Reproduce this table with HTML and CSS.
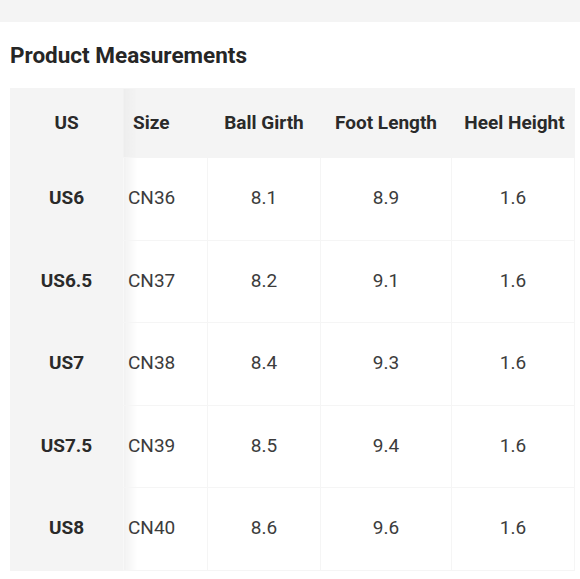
FILE: index.html
```html
<!DOCTYPE html>
<html>
<head>
<meta charset="utf-8">
<link rel="stylesheet" href="styles.css">
</head>
<body>
<div class="topbar"></div>
<section class="panel">
  <h2 class="title">Product Measurements</h2>
  <table class="sizes">
    <colgroup>
      <col class="c1"><col class="c2"><col class="c3"><col class="c4"><col class="c5">
    </colgroup>
    <thead>
      <tr><th class="fixed">US</th><th class="left shade">Size</th><th>Ball Girth</th><th>Foot Length</th><th class="last">Heel Height</th></tr>
    </thead>
    <tbody>
      <tr><th class="fixed">US6</th><td class="left shade">CN36</td><td>8.1</td><td>8.9</td><td>1.6</td></tr>
      <tr><th class="fixed">US6.5</th><td class="left shade">CN37</td><td>8.2</td><td>9.1</td><td>1.6</td></tr>
      <tr><th class="fixed">US7</th><td class="left shade">CN38</td><td>8.4</td><td>9.3</td><td>1.6</td></tr>
      <tr><th class="fixed">US7.5</th><td class="left shade">CN39</td><td>8.5</td><td>9.4</td><td>1.6</td></tr>
      <tr><th class="fixed">US8</th><td class="left shade">CN40</td><td>8.6</td><td>9.6</td><td>1.6</td></tr>
    </tbody>
  </table>
</section>
</body>
</html>
```
FILE: styles.css
```css
html, body { margin: 0; padding: 0; background: #fff; }
body { font-family: Roboto, "Liberation Sans", sans-serif; color: #333; width: 580px; height: 579px; overflow: hidden; }
.topbar { height: 22px; background: #f4f4f4; }
.panel { padding: 0 6px 0 10px; }
.title { margin: 0; padding-top: 19px; height: 47px; box-sizing: border-box; font-size: 22.5px; font-weight: 700; color: #262626; line-height: 28px; }
.sizes { border-collapse: collapse; width: 564px; table-layout: fixed; margin-top: 19px; }
.c1 { width: 112px; } .c2 { width: 85px; } .c3 { width: 113px; } .c4 { width: 131px; } .c5 { width: 123px; }
.sizes th, .sizes td { text-align: center; font-size: 19px; padding: 0 0 2px; border: 1px solid #f5f5f5; }
.sizes thead th { height: 66px; background: #f4f4f4; font-weight: 700; color: #2a2a2a; border-color: #f4f4f4; }
.sizes tbody td, .sizes tbody th { height: 79.5px; }
.sizes tbody td { color: #3c3c3c; font-weight: 400; }
.sizes th.fixed { background: #f4f4f4; font-weight: 700; color: #2a2a2a; border-color: #f4f4f4; }
.sizes .left { text-align: left; padding-left: 5px; }
.sizes thead .left { padding-left: 10px; }
.sizes thead .last { padding-left: 3px; }
.sizes .shade { background-image: linear-gradient(to right, #f1f1f1, rgba(255,255,255,0) 14px); }
.sizes thead .shade { background-image: linear-gradient(to right, #ededed, rgba(244,244,244,0) 14px); }
```
